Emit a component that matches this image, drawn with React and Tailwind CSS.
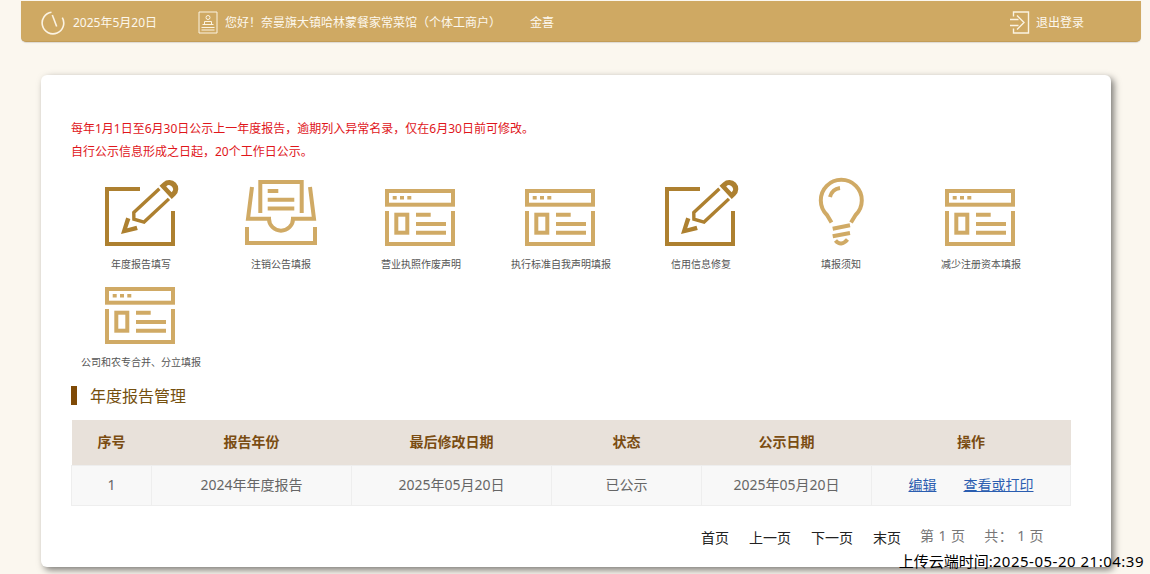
import React from "react";

const GOLD = "#d0aa65";
const DARK = "#ad8030";

function PencilIcon() {
  return (
    <svg width="80" height="75" viewBox="1 0 80 75" fill="none">
      <path d="M40 14H7V69H73V36" stroke={DARK} strokeWidth="4" />
      <g transform="translate(21 59) rotate(-43)">
        <polygon points="0,0 15,-8.5 17,-4.5 8.5,0 17,4.5 15,8.5" fill={DARK} />
        <path d="M59,-7 H24 L19.5,-2 L25,7 H59" stroke={DARK} strokeWidth="3.4" />
        <path d="M61,-9 H66 A9,9 0 0 1 66,9 H61 Z" fill={DARK} />
        <path d="M65.5,-4 A4,4 0 0 1 65.5,4 Z" fill="#fff" />
      </g>
    </svg>
  );
}

function InboxIcon() {
  return (
    <svg width="80" height="75" viewBox="1 0 80 75" fill="none" stroke={GOLD} strokeWidth="4">
      <path d="M20.3 38V7H61.7V38" />
      <path d="M27.7 16H38.3M27.7 24.7H54.3M27.7 33.5H54.3" />
      <path d="M12 12L8 43.7H29A12 12 0 0 0 53 43.7H74L70 12" />
      <path d="M7 52V68H75V52" />
    </svg>
  );
}

function FormIcon() {
  return (
    <svg width="80" height="75" viewBox="1 0 80 75" fill="none" stroke={GOLD} strokeWidth="4">
      <rect x="7" y="16" width="66" height="13.7" />
      <path d="M12.7 22.7H16.7M20 22.7H24M27.3 22.7H31.3" strokeWidth="3.4" />
      <path d="M7 36V69H73V36" />
      <rect x="16.3" y="39.7" width="11" height="18" />
      <path d="M36 39.8H50.7M36 49H66M36 57.7H66" />
    </svg>
  );
}

function BulbIcon() {
  return (
    <svg width="80" height="75" viewBox="1 0 80 75" fill="none" stroke={GOLD} strokeWidth="4">
      <path d="M31.5 47.5L27 40A20.5 20.5 0 1 1 55.6 40L51 47.5" />
      <path d="M30 22A12 12 0 0 1 40 13" />
      <path d="M32.7 53.7L50 50.3M32.7 61.3L50 58" />
      <path d="M35.5 65.5Q41 72 47.5 64.5" />
    </svg>
  );
}

const items = [
  [PencilIcon, "年度报告填写"],
  [InboxIcon, "注销公告填报"],
  [FormIcon, "营业执照作废声明"],
  [FormIcon, "执行标准自我声明填报"],
  [PencilIcon, "信用信息修复"],
  [BulbIcon, "填报须知"],
  [FormIcon, "减少注册资本填报"],
  [FormIcon, "公司和农专合并、分立填报"],
];

function ClockIcon() {
  return (
    <svg width="24" height="24" viewBox="0 0 24 24" fill="none" stroke="#fbf3e2" strokeWidth="1.6">
      <path d="M21.3 6.6A10.8 10.8 0 1 1 10.5 1.3" />
      <path d="M11.3 4L15.7 15.5" />
    </svg>
  );
}

function PersonDocIcon() {
  return (
    <svg width="20" height="23" viewBox="0 0 20 23" fill="none" stroke="#fbf3e2" strokeWidth="1">
      <path d="M1 1H19V22H1Z" />
      <circle cx="10" cy="6.5" r="2" />
      <path d="M6.5 13V10.5H13.5V13" />
      <path d="M4.5 13.5H15.5M3.5 16.5H16.5M3.5 19H16.5" />
    </svg>
  );
}

function LogoutIcon() {
  return (
    <svg width="20" height="23" viewBox="0 0 20 23" fill="none" stroke="#fbf3e2" strokeWidth="1.4">
      <path d="M3.5 5.5V1H18.5V22H3.5V17.5" />
      <path d="M0 8.5H8.5M0 14.5H8.5" />
      <path d="M7 4.5L14 11.5L7 18.5" />
    </svg>
  );
}

export default function App() {
  return (
    <div
      className="relative h-[574px] w-[1150px] overflow-hidden bg-[#fbf7ef] pt-px"
      style={{ fontFamily: '"Noto Sans", "Noto Sans CJK SC", "Liberation Sans", sans-serif' }}
    >
      <header className="ml-[21px] flex h-[41px] w-[1120px] items-center rounded-b-[5px] border-b border-[#c29c58] bg-[#cfa963] pt-[3px] text-xs text-[#fdf8ee] shadow-[0_1px_1px_rgba(0,0,0,0.12)]">
        <div className="ml-[20px] flex items-center">
          <ClockIcon />
          <span className="ml-[8px] w-[125px] whitespace-nowrap">2025年5月20日</span>
        </div>
        <div className="flex items-center">
          <PersonDocIcon />
          <span className="ml-[7px] w-[305px] whitespace-nowrap">您好！奈曼旗大镇哈林蒙餐家常菜馆（个体工商户）</span>
        </div>
        <span>金喜</span>
        <div className="ml-auto mr-[57px] flex items-center">
          <LogoutIcon />
          <span className="ml-[6px]">退出登录</span>
        </div>
      </header>

      <main className="ml-[41px] mt-[33px] h-[492px] w-[1070px] rounded-[6px] bg-white px-[30px] pt-[42px] shadow-[3px_3px_7px_rgba(0,0,0,0.5)]">
        <div className="text-xs leading-[23px] text-[#e0161b]">
          <p>每年1月1日至6月30日公示上一年度报告，逾期列入异常名录，仅在6月30日前可修改。</p>
          <p>自行公示信息形成之日起，20个工作日公示。</p>
        </div>

        <div className="mt-[12px] grid grid-cols-[repeat(7,140px)] auto-rows-[98px]">
          {items.map(([Icon, label], i) => (
            <div key={i} className="flex flex-col items-center">
              <Icon />
              <span className="mt-[7px] whitespace-nowrap text-[10px] leading-[15px] text-[#555]">{label}</span>
            </div>
          ))}
        </div>

        <h2 className="mt-[15px] h-[19px] border-l-[6px] border-[#7f4a06] pl-[13px] text-base font-normal leading-[21px] text-[#75500f]">
          年度报告管理
        </h2>

        <table className="mt-[15px] w-[999px] table-fixed border-collapse text-center text-sm">
          <colgroup>
            <col className="w-[80px]" />
            <col className="w-[200px]" />
            <col className="w-[200px]" />
            <col className="w-[150px]" />
            <col className="w-[170px]" />
            <col className="w-[199px]" />
          </colgroup>
          <thead>
            <tr className="h-[45px] bg-[#e8e1da] font-bold text-[#7a4c12]">
              <th>序号</th>
              <th>报告年份</th>
              <th>最后修改日期</th>
              <th>状态</th>
              <th>公示日期</th>
              <th>操作</th>
            </tr>
          </thead>
          <tbody>
            <tr className="h-[40px] bg-[#f8f8f8] text-[#666]">
              <td className="border border-[#eeeeee]">1</td>
              <td className="border border-[#eeeeee]">2024年年度报告</td>
              <td className="border border-[#eeeeee]">2025年05月20日</td>
              <td className="border border-[#eeeeee]">已公示</td>
              <td className="border border-[#eeeeee]">2025年05月20日</td>
              <td className="border border-[#eeeeee]">
                <a className="text-[#2a5db0] underline">编辑</a>
                <a className="ml-[27px] text-[#2a5db0] underline">查看或打印</a>
              </td>
            </tr>
          </tbody>
        </table>

        <div className="mt-[21px] flex h-[22px] items-center justify-end gap-[20px] pr-[37px] text-sm text-[#222]">
          <span>首页</span>
          <span>上一页</span>
          <span>下一页</span>
          <span>末页</span>
          <span className="-mt-[4px] -ml-px whitespace-pre tracking-[0.4px] text-[#777]">第 1 页</span>
          <span className="-mt-[4px] -ml-px whitespace-pre tracking-[0.4px] text-[#777]">共： 1 页</span>
        </div>
      </main>

      <div className="absolute bottom-[3px] right-[6px] whitespace-nowrap text-[15px] leading-[20px] text-black">
        上传云端时间:<span className="tracking-[0.5px]">2025-05-20 21:04:39</span>
      </div>
    </div>
  );
}
